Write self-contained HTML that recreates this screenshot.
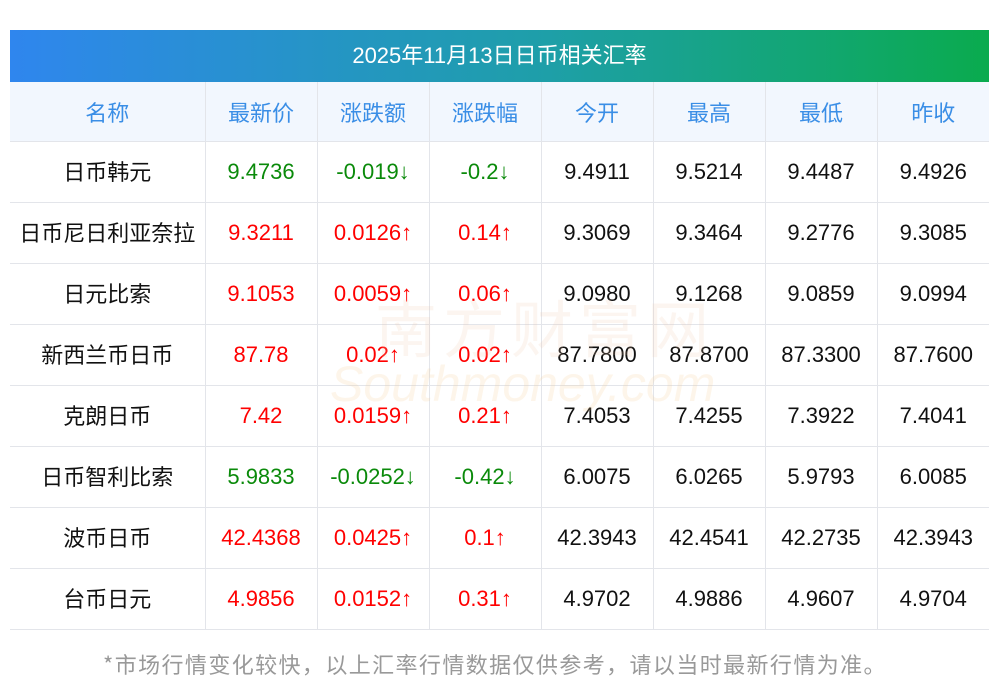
<!DOCTYPE html><html><head><meta charset="utf-8"><style>
body{margin:0;background:#fff;width:1000px;height:697px;overflow:hidden;font-family:"Liberation Sans","Noto Sans CJK SC",sans-serif;position:relative}
.bar{position:absolute;left:10px;top:30px;width:979px;height:52px;background:linear-gradient(90deg,#2f86ee,#1e9fa8 55%,#0aab4e);color:#fff;font-size:22px;text-align:center;line-height:48px}
table{position:absolute;left:10px;top:82px;border-collapse:collapse;width:979px;table-layout:fixed}
td,th{border-right:1px solid #e3e5ea;border-bottom:1px solid #e3e5ea;text-align:center;font-size:22px;font-weight:normal;height:60px;padding:0;color:#111;line-height:22px}
tr:first-child th{height:59px}
td:first-child{font-family:"Noto Sans CJK SC",sans-serif;position:relative;top:-1px}
td:last-child,th:last-child{border-right:none}
th{background:#f2f7fe;color:#3a8ee6;font-family:"Noto Sans CJK SC",sans-serif}
.g{color:#0a8a0a}.r{color:#f00}
.ft{position:absolute;top:648px;left:0;width:990px;text-align:center;color:#999;font-size:22px;letter-spacing:1.4px;font-family:"Noto Sans CJK SC",sans-serif;line-height:32px}
.bar span{font-family:"Noto Sans CJK SC",sans-serif}
.wm{position:absolute;left:375px;top:285px;font-size:62px;color:rgba(240,200,170,.18);letter-spacing:6px;font-family:"Noto Sans CJK SC",sans-serif;line-height:80px}
.wm2{position:absolute;left:330px;top:355px;font-size:50px;font-style:italic;color:rgba(245,205,150,.2)}
</style></head><body>
<div class="bar">2025<span>年</span>11<span>月</span>13<span>日日币相关汇率</span></div>
<table>
<colgroup><col style="width:195px"><col style="width:112px"><col style="width:112px"><col style="width:112px"><col style="width:112px"><col style="width:112px"><col style="width:112px"><col style="width:112px"></colgroup>
<tr><th>名称</th><th>最新价</th><th>涨跌额</th><th>涨跌幅</th><th>今开</th><th>最高</th><th>最低</th><th>昨收</th></tr>
<tr><td>日币韩元</td><td class="g">9.4736</td><td class="g">-0.019↓</td><td class="g">-0.2↓</td><td>9.4911</td><td>9.5214</td><td>9.4487</td><td>9.4926</td></tr>
<tr><td>日币尼日利亚奈拉</td><td class="r">9.3211</td><td class="r">0.0126↑</td><td class="r">0.14↑</td><td>9.3069</td><td>9.3464</td><td>9.2776</td><td>9.3085</td></tr>
<tr><td>日元比索</td><td class="r">9.1053</td><td class="r">0.0059↑</td><td class="r">0.06↑</td><td>9.0980</td><td>9.1268</td><td>9.0859</td><td>9.0994</td></tr>
<tr><td>新西兰币日币</td><td class="r">87.78</td><td class="r">0.02↑</td><td class="r">0.02↑</td><td>87.7800</td><td>87.8700</td><td>87.3300</td><td>87.7600</td></tr>
<tr><td>克朗日币</td><td class="r">7.42</td><td class="r">0.0159↑</td><td class="r">0.21↑</td><td>7.4053</td><td>7.4255</td><td>7.3922</td><td>7.4041</td></tr>
<tr><td>日币智利比索</td><td class="g">5.9833</td><td class="g">-0.0252↓</td><td class="g">-0.42↓</td><td>6.0075</td><td>6.0265</td><td>5.9793</td><td>6.0085</td></tr>
<tr><td>波币日币</td><td class="r">42.4368</td><td class="r">0.0425↑</td><td class="r">0.1↑</td><td>42.3943</td><td>42.4541</td><td>42.2735</td><td>42.3943</td></tr>
<tr><td>台币日元</td><td class="r">4.9856</td><td class="r">0.0152↑</td><td class="r">0.31↑</td><td>4.9702</td><td>4.9886</td><td>4.9607</td><td>4.9704</td></tr>
</table>
<div class="wm">南方财富网</div><div class="wm2">Southmoney.com</div>
<div class="ft">*市场行情变化较快，以上汇率行情数据仅供参考，请以当时最新行情为准。</div>
</body></html>
